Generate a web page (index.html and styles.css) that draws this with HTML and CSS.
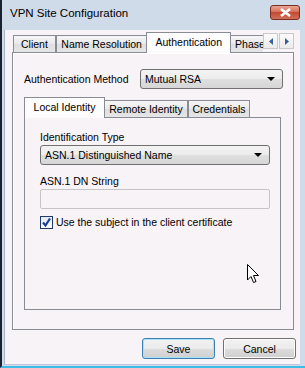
FILE: index.html
```html
<!DOCTYPE html>
<html lang="en">
<head>
  <meta charset="UTF-8" />
  <title>VPN Site Configuration</title>
  <link rel="stylesheet" href="styles.css">
</head>
<body>

  <div class="window">
    <div class="titlebar">
      <span class="title">VPN Site Configuration</span>
      <button class="close">
        <svg width="13" height="9" viewBox="0 0 13 9"><path d="M2 1 L11 8 M11 1 L2 8" stroke="#fff" stroke-width="2.6" fill="none"/></svg>
      </button>
    </div>

    <div class="client">
      <div class="tabs">
        <div class="tab w-client">Client</div>
        <div class="tab w-name">Name Resolution</div>
        <div class="tab active w-auth">Authentication</div>
        <div class="tab clipped">Phase</div>
        <div class="scroller">
          <span class="arrow"><svg width="4" height="7" viewBox="0 0 4 7"><path d="M4 0 L0 3.5 L4 7 Z" fill="#3a5f9a"/></svg></span>
          <span class="arrow"><svg width="4" height="7" viewBox="0 0 4 7"><path d="M0 0 L4 3.5 L0 7 Z" fill="#3a5f9a"/></svg></span>
        </div>
      </div>

      <div class="panel">
        <div class="row">
          <span class="label">Authentication Method</span>
          <div class="combo small">Mutual RSA<span class="drop"></span></div>
        </div>

        <div class="subtabs">
          <div class="tab active w-local">Local Identity</div>
          <div class="tab w-remote">Remote Identity</div>
          <div class="tab w-cred">Credentials</div>
        </div>
        <div class="subpanel">
          <span class="label block">Identification Type</span>
          <div class="combo wide">ASN.1 Distinguished Name<span class="drop"></span></div>
          <span class="label block gap">ASN.1 DN String</span>
          <div class="field"></div>
          <div class="check">
            <span class="box">
              <svg width="11" height="11" viewBox="0 0 11 11"><path d="M2 5.5 L4.5 8.5 L9 1.5" stroke="#1c3f95" stroke-width="2.2" fill="none"/></svg>
            </span>
            Use the subject in the client certificate
          </div>
          <svg class="cursor" width="13" height="20" viewBox="0 0 13 20">
            <path d="M0.5 0.5 L0.5 16 L4 12.5 L6.5 18.5 L9 17.5 L6.5 11.5 L11.5 11.5 Z" fill="#fff" stroke="#000" stroke-width="1"/>
          </svg>
        </div>
      </div>

      <div class="buttons">
        <button class="btn default">Save</button>
        <button class="btn">Cancel</button>
      </div>
    </div>
  </div>

</body>
</html>
```

FILE: styles.css
```css
body {
  margin: 0;
  background: #141a26;
  font-family: "Liberation Sans", Arial, sans-serif;
  font-size: 10.5px;
  color: #000;
}
.window {
  width: 305px;
  height: 368px;
  box-sizing: border-box;
  background: #cfdbe9;
  border-left: 2px solid #1a2232;
  border-bottom: 2px solid #3bbde6;
  padding: 0 5px 1px 2px;
  display: flex;
  flex-direction: column;
}
.titlebar {
  height: 30px;
  display: flex;
  align-items: flex-start;
  justify-content: space-between;
  padding-left: 6px;
}
.title {
  margin-top: 7px;
  font-size: 11.5px;
  color: #000;
}
.close {
  margin-top: 5px;
  width: 30px;
  height: 15px;
  padding: 0;
  border: 1px solid #7a2e22;
  border-radius: 3px;
  background: linear-gradient(#e8a493, #d66a52 50%, #c44a31 50%, #d0705a);
  display: flex;
  align-items: center;
  justify-content: center;
}
.client {
  flex: 1;
  background: #f7f3f7;
  border-left: 1px solid #a9b4c2;
  border-bottom: 1px solid #c9c2dc;
  padding: 2px 6px 0 7px;
  display: flex;
  flex-direction: column;
}

/* tabs */
.tabs, .subtabs {
  display: flex;
  align-items: flex-end;
  height: 20px;
  padding-left: 1px;
  position: relative;
  z-index: 1;
}
.tab {
  box-sizing: border-box;
  height: 17px;
  border: 1px solid #898c95;
  border-bottom: none;
  background: linear-gradient(#f6f6f6, #e9e9e9 50%, #dedede 50%, #e6e6e6);
  text-align: center;
  line-height: 16px;
  white-space: nowrap;
}
.tab.active {
  height: 21px;
  margin-bottom: -1px;
  background: #fcfcfc;
  line-height: 19px;
  margin-left: -1px;
  margin-right: -1px;
}
.w-client { width: 43px; }
.w-name { width: 92px; }
.w-auth { width: 85px; }
.tab.clipped {
  width: 33px;
  border-right: none;
  overflow: hidden;
  text-align: left;
  padding-left: 4px;
}
.scroller {
  display: flex;
  gap: 1px;
  align-self: flex-start;
  margin-top: 1px;
}
.arrow {
  box-sizing: border-box;
  width: 15px;
  height: 16px;
  border: 1px solid #c8c8c8;
  background: linear-gradient(#fbfbfb, #ebebeb);
  display: flex;
  align-items: center;
  justify-content: center;
}

.panel {
  box-sizing: border-box;
  height: 278px;
  border: 1px solid #898c95;
  box-shadow: inset 1px 1px #fff;
  padding: 16px 10px 0 11px;
}
.row {
  display: flex;
  align-items: center;
  justify-content: space-between;
}
.label.block {
  display: block;
  line-height: 13px;
  margin-bottom: 1px;
}
.label.gap {
  margin-top: 10px;
}

.combo {
  box-sizing: border-box;
  height: 20px;
  border: 1px solid #707070;
  border-radius: 3px;
  background: linear-gradient(#f3f3f3, #ececec 50%, #dfdfdf 50%, #d6d6d6);
  padding-left: 4px;
  line-height: 18px;
  display: flex;
  justify-content: space-between;
  align-items: center;
}
.combo.small { width: 143px; }
.combo.wide { width: 230px; }
.drop {
  width: 0;
  height: 0;
  margin-right: 7px;
  border-left: 4px solid transparent;
  border-right: 4px solid transparent;
  border-top: 4px solid #000;
}

.subtabs {
  margin-top: 8px;
}
.w-local { width: 81px; }
.w-remote { width: 84px; }
.w-cred { width: 62px; }

.subpanel {
  box-sizing: border-box;
  width: 257px;
  height: 193px;
  border: 1px solid #898c95;
  padding: 13px 0 0 15px;
  position: relative;
}
.field {
  box-sizing: border-box;
  width: 230px;
  height: 20px;
  border: 1px solid #c5c5c5;
  border-radius: 2px;
}
.check {
  margin-top: 7px;
  display: flex;
  align-items: center;
  gap: 3px;
  line-height: 13px;
}
.box {
  box-sizing: border-box;
  width: 13px;
  height: 13px;
  border: 1px solid #1f3a66;
  background: linear-gradient(#dfe9f5, #ffffff);
  display: flex;
  align-items: center;
  justify-content: center;
}
.cursor {
  position: absolute;
  left: 222px;
  top: 146px;
}

.buttons {
  display: flex;
  justify-content: flex-end;
  gap: 8px;
  margin-top: 8px;
  margin-right: -2px;
}
.btn {
  box-sizing: border-box;
  width: 73px;
  height: 21px;
  padding: 0;
  font-family: "Liberation Sans", Arial, sans-serif;
  font-size: 10.5px;
  border: 1px solid #707070;
  border-radius: 3px;
  background: linear-gradient(#f2f2f2, #ebebeb 50%, #dddddd 50%, #cfcfcf);
  box-shadow: inset 0 0 0 1px #fcfcfc;
}
.btn.default {
  border-color: #3c7fb1;
  box-shadow: inset 0 0 0 1px #a6e3f8;
}
```
